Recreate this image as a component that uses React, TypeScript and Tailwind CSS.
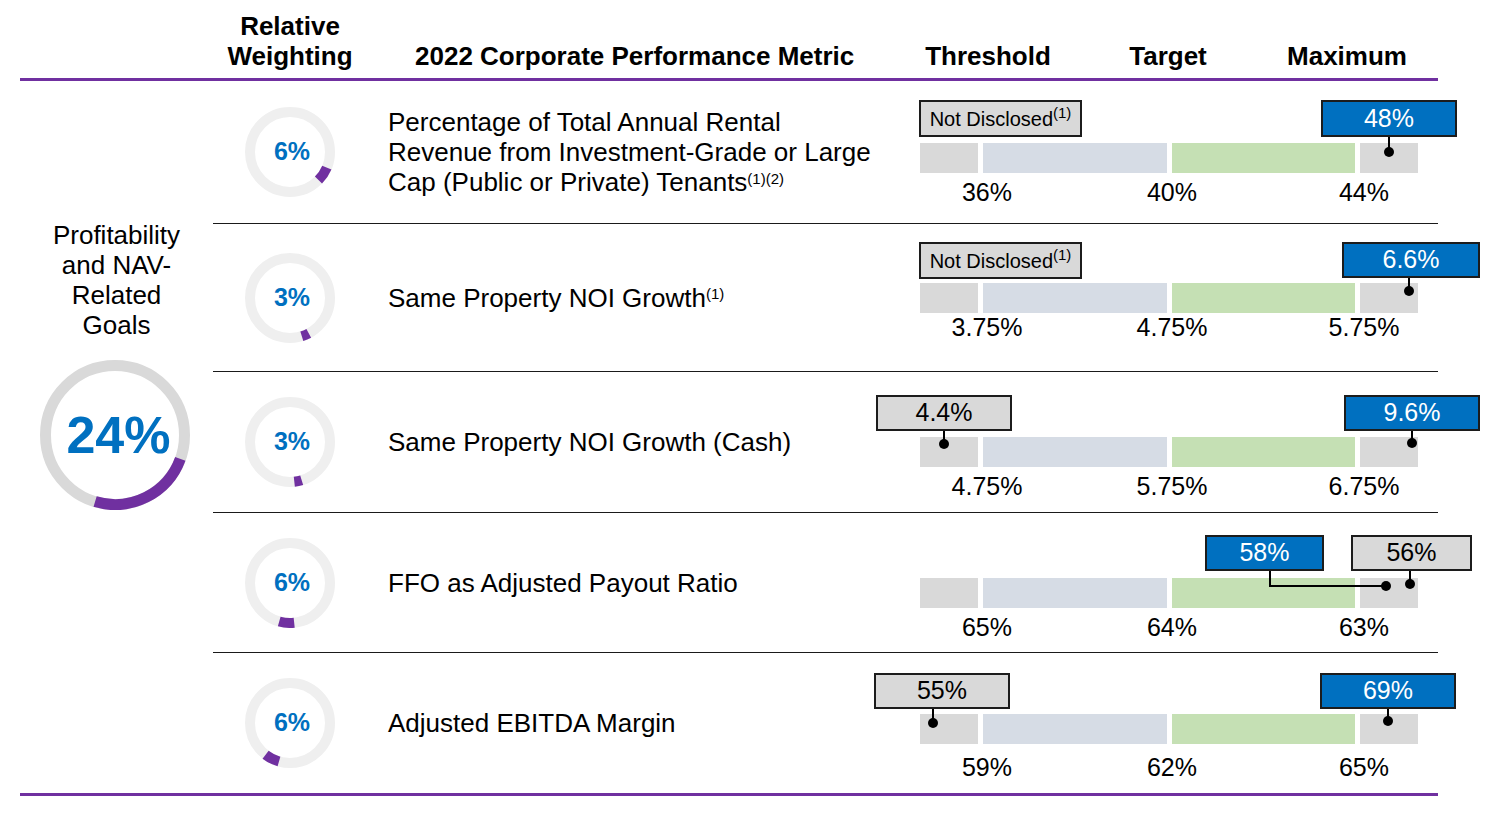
import type { ReactNode } from "react";

type Ring = {
  size: number;
  stroke: number;
  track: string;
  start: number;
  pct: number;
  children: ReactNode;
};

function Donut({ size, stroke, track, start, pct, children }: Ring) {
  const r = (size - stroke) / 2;
  const c = 2 * Math.PI * r;
  const mid = size / 2;
  return (
    <div className="relative flex shrink-0 items-center justify-center">
      <svg width={size} height={size} viewBox={`0 0 ${size} ${size}`}>
        <circle cx={mid} cy={mid} r={r} fill="none" stroke={track} strokeWidth={stroke} />
        <circle
          cx={mid}
          cy={mid}
          r={r}
          fill="none"
          stroke="#7030a0"
          strokeWidth={stroke}
          strokeDasharray={`${c * pct} ${c}`}
          transform={`rotate(${start - 90} ${mid} ${mid})`}
        />
      </svg>
      <div className="absolute inset-0 flex items-center justify-center font-bold text-[#0070c0]">{children}</div>
    </div>
  );
}

const Sup = ({ children }: { children: ReactNode }) => <sup className="text-[15px]">{children}</sup>;

type Callout = {
  text: ReactNode;
  blue?: boolean;
  box: string;
  stem: string;
  dot: string;
  elbow?: string;
};

type Row = {
  pct: string;
  weight: number;
  start: number;
  metric: ReactNode;
  height: string;
  barTop: string;
  labelTop: string;
  labels: string[];
  callouts: Callout[];
};

const rows: Row[] = [
  {
    pct: "6%",
    weight: 0.06,
    start: 113,
    metric: (
      <>
        Percentage of Total Annual Rental
        <br />
        Revenue from Investment-Grade or Large
        <br />
        Cap (Public or Private) Tenants<Sup>(1)(2)</Sup>
      </>
    ),
    height: "h-[143px] border-b border-[#1a1a1a]",
    barTop: "pt-[62px]",
    labelTop: "pt-[5px]",
    labels: ["36%", "40%", "44%"],
    callouts: [
      {
        text: (
          <span className="text-[20px]">
            Not Disclosed<Sup>(1)</Sup>
          </span>
        ),
        box: "left-[49px] top-[19px] w-[163px] h-[37px]",
        stem: "hidden",
        dot: "hidden",
      },
      {
        text: "48%",
        blue: true,
        box: "left-[451px] top-[19px] w-[136px] h-[37px]",
        stem: "left-[518px] top-[56px] h-[15px]",
        dot: "left-[514px] top-[66px]",
      },
    ],
  },
  {
    pct: "3%",
    weight: 0.03,
    start: 152,
    metric: (
      <>
        Same Property NOI Growth<Sup>(1)</Sup>
      </>
    ),
    height: "h-[148px] border-b border-[#1a1a1a]",
    barTop: "pt-[59px]",
    labelTop: "pt-0",
    labels: ["3.75%", "4.75%", "5.75%"],
    callouts: [
      {
        text: (
          <span className="text-[20px]">
            Not Disclosed<Sup>(1)</Sup>
          </span>
        ),
        box: "left-[49px] top-[18px] w-[163px] h-[37px]",
        stem: "hidden",
        dot: "hidden",
      },
      {
        text: "6.6%",
        blue: true,
        box: "left-[472px] top-[18px] w-[138px] h-[36px]",
        stem: "left-[538px] top-[54px] h-[13px]",
        dot: "left-[534px] top-[62px]",
      },
    ],
  },
  {
    pct: "3%",
    weight: 0.03,
    start: 163,
    metric: <>Same Property NOI Growth (Cash)</>,
    height: "h-[141px] border-b border-[#1a1a1a]",
    barTop: "pt-[65px]",
    labelTop: "pt-[5px]",
    labels: ["4.75%", "5.75%", "6.75%"],
    callouts: [
      {
        text: "4.4%",
        box: "left-[6px] top-[23px] w-[136px] h-[36px]",
        stem: "left-[73px] top-[59px] h-[13px]",
        dot: "left-[69px] top-[67px]",
      },
      {
        text: "9.6%",
        blue: true,
        box: "left-[474px] top-[23px] w-[136px] h-[36px]",
        stem: "left-[541px] top-[59px] h-[12px]",
        dot: "left-[537px] top-[66px]",
      },
    ],
  },
  {
    pct: "6%",
    weight: 0.06,
    start: 174,
    metric: <>FFO as Adjusted Payout Ratio</>,
    height: "h-[140px] border-b border-[#1a1a1a]",
    barTop: "pt-[65px]",
    labelTop: "pt-[5px]",
    labels: ["65%", "64%", "63%"],
    callouts: [
      {
        text: "58%",
        blue: true,
        box: "left-[335px] top-[22px] w-[119px] h-[36px]",
        stem: "left-[399px] top-[58px] h-[15px]",
        elbow: "left-[399px] top-[72px] w-[117px]",
        dot: "left-[511px] top-[68px]",
      },
      {
        text: "56%",
        box: "left-[481px] top-[22px] w-[121px] h-[36px]",
        stem: "left-[539px] top-[58px] h-[13px]",
        dot: "left-[535px] top-[66px]",
      },
    ],
  },
  {
    pct: "6%",
    weight: 0.06,
    start: 196,
    metric: <>Adjusted EBITDA Margin</>,
    height: "h-[140px]",
    barTop: "pt-[61px]",
    labelTop: "pt-[9px]",
    labels: ["59%", "62%", "65%"],
    callouts: [
      {
        text: "55%",
        box: "left-[4px] top-[20px] w-[136px] h-[36px]",
        stem: "left-[62px] top-[56px] h-[14px]",
        dot: "left-[58px] top-[65px]",
      },
      {
        text: "69%",
        blue: true,
        box: "left-[450px] top-[20px] w-[136px] h-[36px]",
        stem: "left-[517px] top-[56px] h-[12px]",
        dot: "left-[513px] top-[63px]",
      },
    ],
  },
];

function Chart({ row }: { row: Row }) {
  return (
    <div className={`relative min-w-0 flex-1 self-stretch ${row.barTop}`}>
      <div className="ml-[50px] flex h-[30px] gap-[5px]">
        <div className="w-[58px] shrink-0 bg-[#d9d9d9]" />
        <div className="w-[184px] shrink-0 bg-[#d6dce5]" />
        <div className="w-[183px] shrink-0 bg-[#c5e0b4]" />
        <div className="w-[58px] shrink-0 bg-[#d9d9d9]" />
      </div>
      <div className={`flex text-[25px] leading-[28px] ${row.labelTop}`}>
        <div className="w-[234px] shrink-0 text-center">{row.labels[0]}</div>
        <div className="w-[136px] shrink-0 text-center">{row.labels[1]}</div>
        <div className="w-[248px] shrink-0 text-center">{row.labels[2]}</div>
      </div>
      {row.callouts.map((c, i) => (
        <div key={i}>
          <div
            className={`absolute flex items-center justify-center border-2 border-[#1c1c1c] text-[25px] ${c.box} ${
              c.blue ? "bg-[#0070c0] text-white" : "bg-[#d9d9d9] text-black"
            }`}
          >
            {c.text}
          </div>
          <div className={`absolute w-[1.5px] bg-black ${c.stem}`} />
          {c.elbow && <div className={`absolute h-[1.5px] bg-black ${c.elbow}`} />}
          <div className={`absolute h-[10px] w-[10px] rounded-full bg-black ${c.dot}`} />
        </div>
      ))}
    </div>
  );
}

export default function App() {
  return (
    <div className="min-h-[815px] bg-white font-['Liberation_Sans',Arial,sans-serif] text-black">
      <div className="ml-[20px] w-[1418px]">
        {/* header */}
        <div className="flex h-[81px] items-end border-b-[3px] border-[#7030a0] pb-[7px] text-[26px] font-bold leading-[30px]">
          <div className="w-[193px] shrink-0" />
          <div className="w-[154px] shrink-0 text-center">
            Relative
            <br />
            Weighting
          </div>
          <div className="w-[503px] shrink-0 pl-[48px]">2022 Corporate Performance Metric</div>
          <div className="flex">
            <div className="w-[236px] shrink-0 text-center">Threshold</div>
            <div className="w-[124px] shrink-0 text-center">Target</div>
            <div className="w-[234px] shrink-0 text-center">Maximum</div>
          </div>
        </div>

        {/* body */}
        <div className="flex border-b-[3px] border-[#7030a0]">
          <div className="flex w-[193px] shrink-0 flex-col items-center pt-[139px]">
            <div className="text-center text-[26px] leading-[30px]">
              Profitability
              <br />
              and NAV-
              <br />
              Related
              <br />
              Goals
            </div>
            <div className="mt-[20px] -ml-[4px]">
              <Donut size={150} stroke={11} track="#d9d9d9" start={110} pct={0.24}>
                <span className="pl-[8px] text-[52px]">24%</span>
              </Donut>
            </div>
          </div>

          <div className="min-w-0 flex-1">
            {rows.map((row, i) => (
              <div key={i} className={`flex items-center ${row.height}`}>
                <div className="flex w-[154px] shrink-0 justify-center">
                  <Donut size={90} stroke={10} track="#efefef" start={row.start} pct={row.weight}>
                    <span className="pl-[4px] text-[25px]">{row.pct}</span>
                  </Donut>
                </div>
                <div className="w-[503px] shrink-0 whitespace-nowrap pl-[21px] text-[26px] leading-[30px]">
                  {row.metric}
                </div>
                <Chart row={row} />
              </div>
            ))}
          </div>
        </div>
      </div>
    </div>
  );
}
